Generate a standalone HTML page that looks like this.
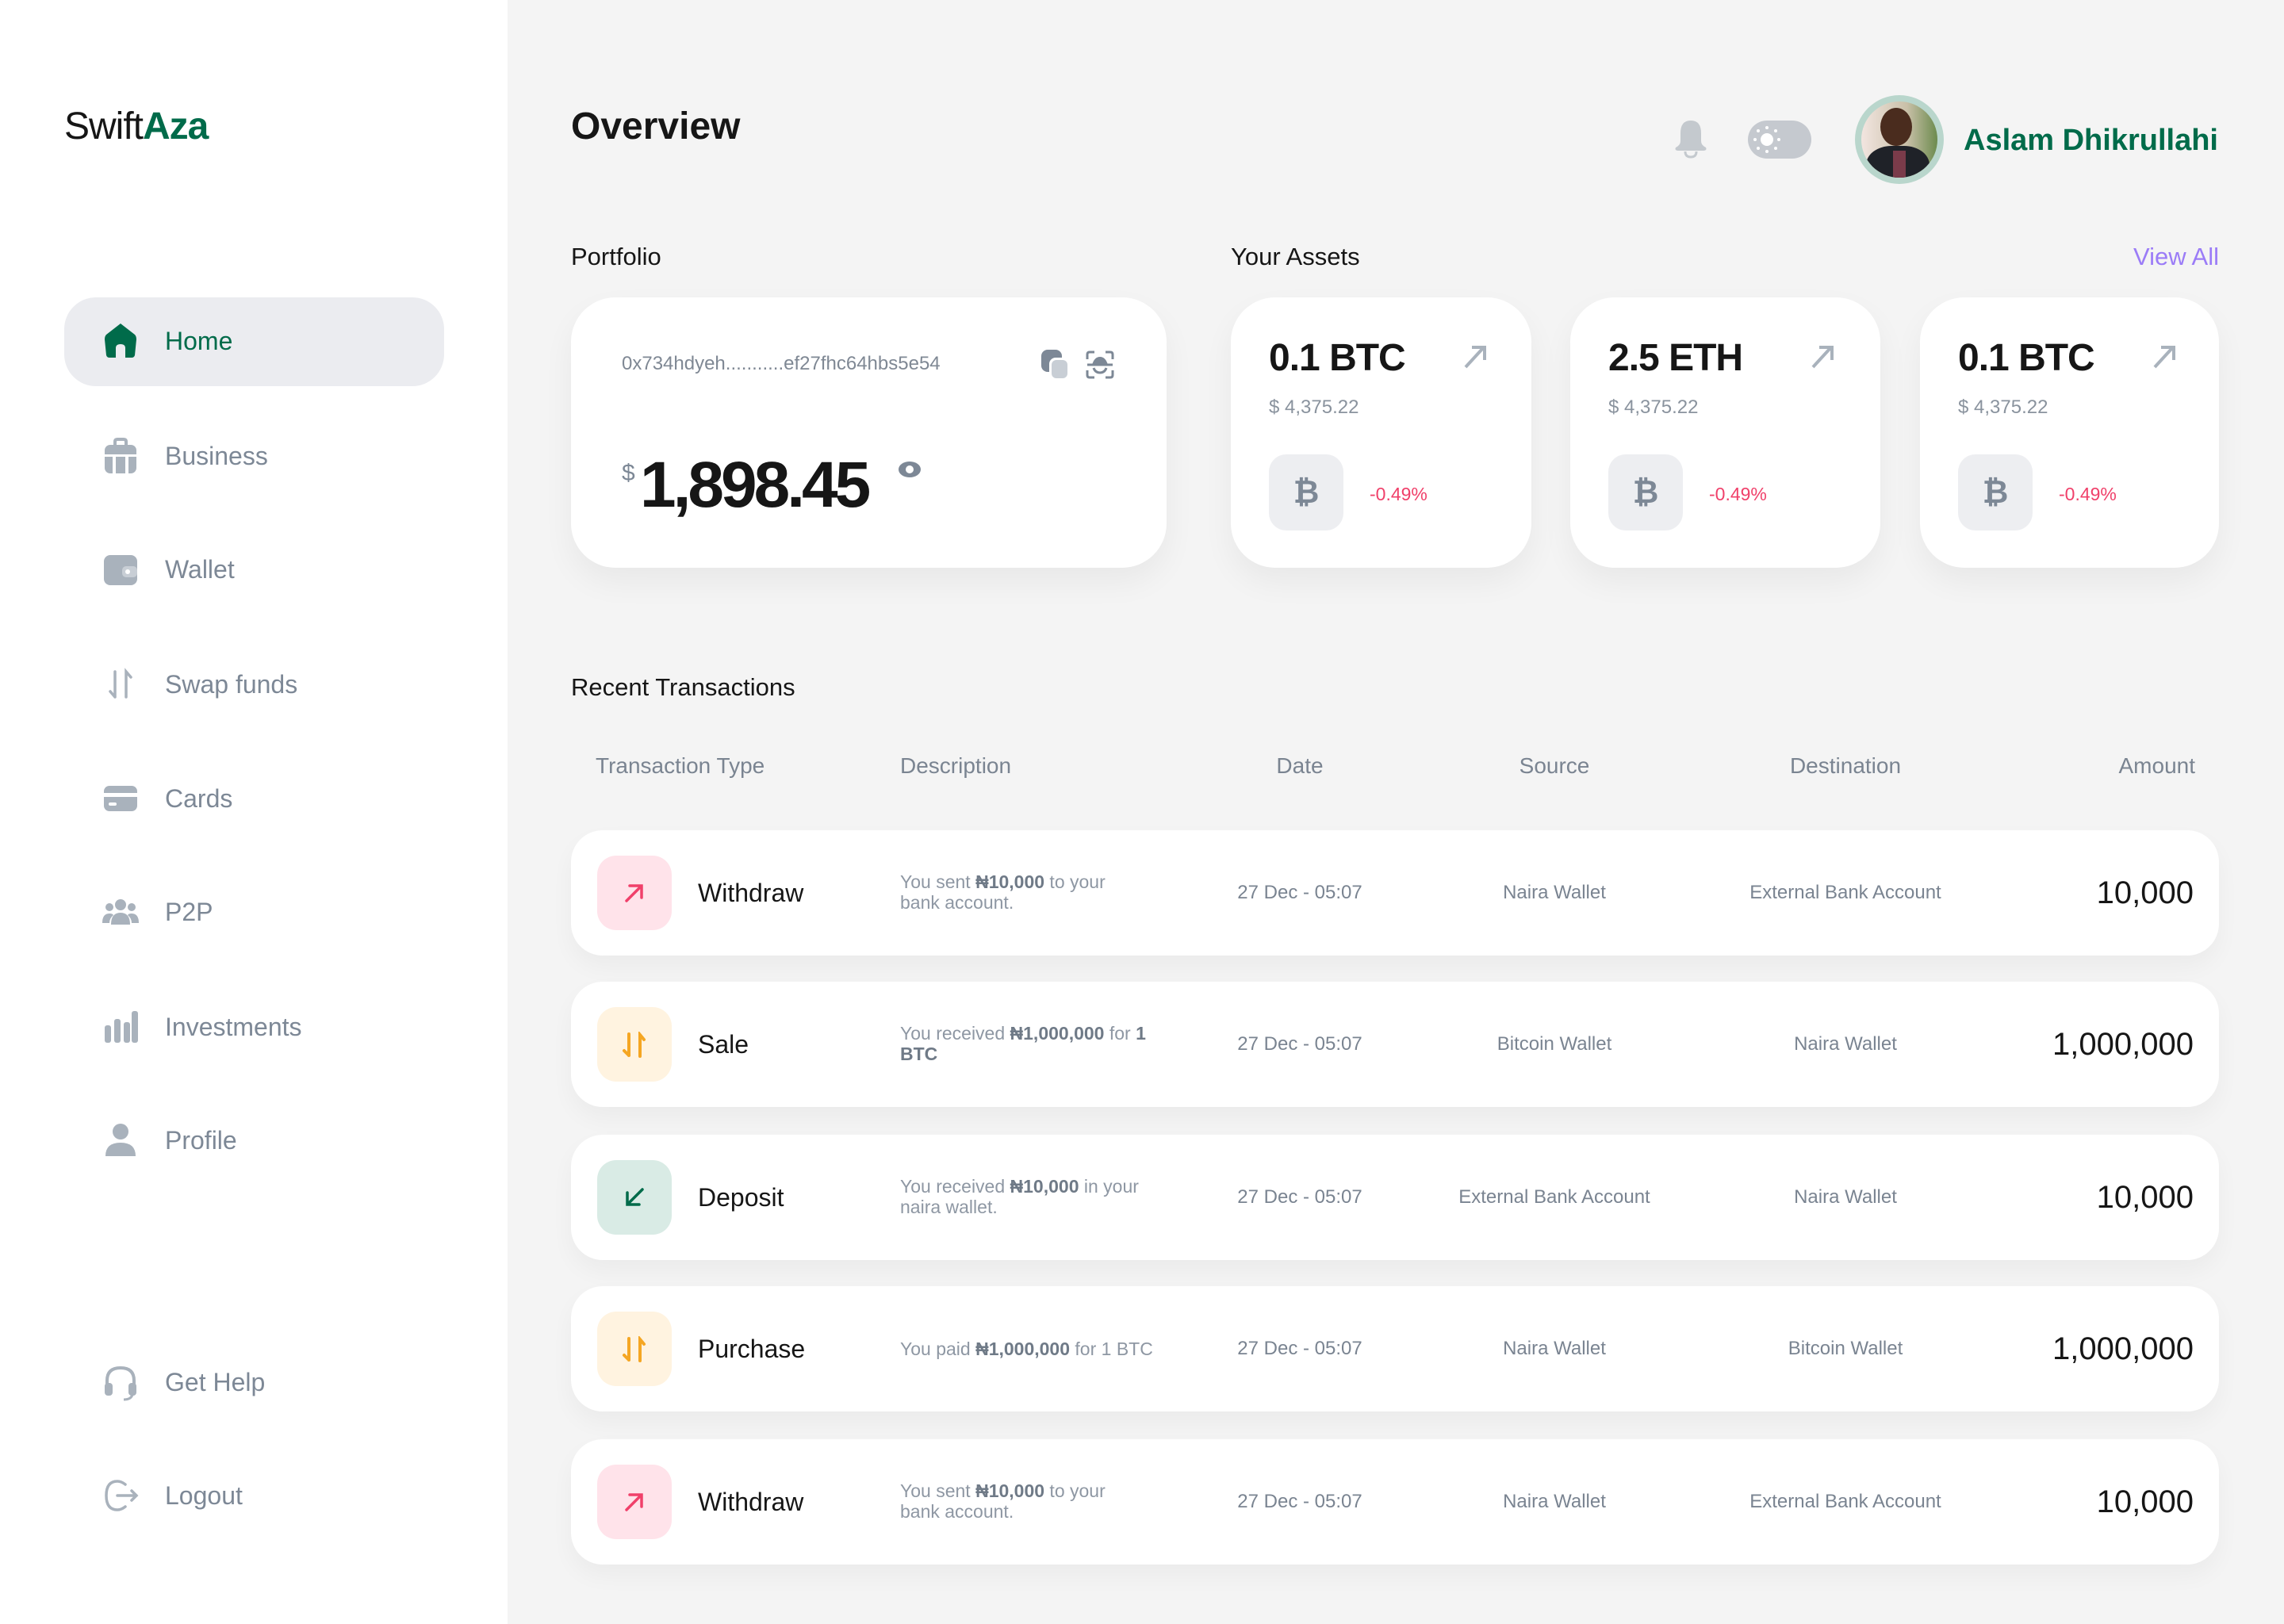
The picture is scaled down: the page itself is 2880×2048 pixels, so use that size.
<!DOCTYPE html>
<html><head><meta charset="utf-8"><style>
*{margin:0;padding:0;box-sizing:border-box}
body{width:2880px;height:2048px;position:relative;background:#f4f4f4;font-family:"Liberation Sans",sans-serif;overflow:hidden;color:#161616}
.a{position:absolute;white-space:nowrap}
#side{position:absolute;left:0;top:0;width:640px;height:2048px;background:#fff}
.nav{position:absolute;left:208px;font-size:32px;color:#7d8896;line-height:40px}
.ni{position:absolute;left:128px;width:48px;height:48px}
.card{position:absolute;background:#fff;border-radius:56px;box-shadow:0 18px 40px rgba(0,0,0,0.05)}
.row{position:absolute;left:720px;width:2078px;height:158px;background:#fff;border-radius:40px;box-shadow:0 14px 30px rgba(0,0,0,0.04)}
.ib{position:absolute;left:33px;top:32px;width:94px;height:94px;border-radius:24px}
.ty{position:absolute;left:160px;top:59px;font-size:32px;line-height:40px;font-weight:500}
.ds{position:absolute;left:415px;font-size:23px;line-height:26px;color:#8e97a3}
.ds b{color:#6f7a87;font-weight:700}
.c{position:absolute;font-size:24px;line-height:30px;color:#7a8491;text-align:center;width:400px;top:64px}
.am{position:absolute;right:32px;top:56px;font-size:40px;line-height:46px;text-align:right}
.hd{position:absolute;top:949px;font-size:28px;line-height:34px;color:#7a8491}
.coin{position:absolute;font-size:48px;font-weight:700;line-height:56px;left:48px;top:49px;letter-spacing:-1px}
.usd{position:absolute;left:48px;top:124px;font-size:24px;color:#8a939e;line-height:30px}
.bb{position:absolute;left:48px;top:198px;width:94px;height:96px;border-radius:22px;background:#edeef1;color:#7d8896;font-size:40px;font-weight:700;text-align:center;line-height:96px}
.pc{position:absolute;left:175px;top:233px;font-size:23px;color:#f0406a;line-height:30px}
.ar{position:absolute;top:56px;width:36px;height:36px}
</style></head><body>
<div id="side">
<div class="a" style="left:81px;top:132px;font-size:48px;line-height:56px;letter-spacing:-1px">Swift<b style="color:#006b4a;font-weight:900">Aza</b></div>
<div style="position:absolute;left:81px;top:375px;width:479px;height:112px;border-radius:40px;background:#ebecf0"></div>
<svg class="ni" style="top:406px" viewBox="0 0 48 48"><path d="M24 2 L42 16 Q44 18 44 22 L42 42 Q41 45 38 45 L30 45 L30 33 Q30 28 24 28 Q18 28 18 33 L18 45 L10 45 Q7 45 6 42 L4 22 Q4 18 6 16 Z" fill="#006b4a"/></svg>
<div class="nav" style="top:410px;color:#006b4a">Home</div>
<svg class="ni" style="top:551px" viewBox="0 0 48 48"><path d="M17 10 V6 Q17 3 20 3 H28 Q31 3 31 6 V10" stroke="#a9b2bc" stroke-width="4" fill="none"/><rect x="4" y="10" width="40" height="36" rx="7" fill="#a9b2bc"/><rect x="14" y="24" width="4" height="22" fill="#fff"/><rect x="30" y="24" width="4" height="22" fill="#fff"/><rect x="4" y="22" width="40" height="3" fill="#fff"/></svg>
<div class="nav" style="top:555px">Business</div>
<svg class="ni" style="top:694px" viewBox="0 0 48 48"><rect x="3" y="6" width="42" height="38" rx="8" fill="#a9b2bc"/><rect x="26" y="20" width="19" height="14" rx="5" fill="#c8ced5"/><circle cx="33" cy="27" r="3" fill="#fff"/></svg>
<div class="nav" style="top:698px">Wallet</div>
<svg class="ni" style="top:839px" viewBox="0 0 48 48"><path d="M17 8 V40 M17 40 L11 33 M31 40 V8 L37 15" stroke="#a9b2bc" stroke-width="3.5" fill="none" stroke-linecap="round"/></svg>
<div class="nav" style="top:843px">Swap funds</div>
<svg class="ni" style="top:983px" viewBox="0 0 48 48"><rect x="3" y="8" width="42" height="32" rx="7" fill="#a9b2bc"/><rect x="3" y="17" width="42" height="5" fill="#fff"/><rect x="9" y="29" width="10" height="4" rx="2" fill="#fff"/></svg>
<div class="nav" style="top:987px">Cards</div>
<svg class="ni" style="top:1126px" viewBox="0 0 48 48"><circle cx="24" cy="15" r="7" fill="#a9b2bc"/><circle cx="10" cy="18" r="5" fill="#a9b2bc"/><circle cx="38" cy="18" r="5" fill="#a9b2bc"/><path d="M12 40 Q12 25 24 25 Q36 25 36 40 Z M1 38 Q1 26 10 26 Q14 26 15 28 Q10 32 10 38 Z M47 38 Q47 26 38 26 Q34 26 33 28 Q38 32 38 38 Z" fill="#a9b2bc"/></svg>
<div class="nav" style="top:1130px">P2P</div>
<svg class="ni" style="top:1271px" viewBox="0 0 48 48"><rect x="4" y="22" width="8" height="22" rx="3" fill="#a9b2bc"/><rect x="16" y="14" width="8" height="30" rx="3" fill="#a9b2bc"/><rect x="28" y="18" width="8" height="26" rx="3" fill="#a9b2bc"/><rect x="38" y="4" width="8" height="40" rx="3" fill="#a9b2bc"/></svg>
<div class="nav" style="top:1275px">Investments</div>
<svg class="ni" style="top:1414px" viewBox="0 0 48 48"><circle cx="24" cy="13" r="10" fill="#a9b2bc"/><path d="M5 44 Q5 27 24 27 Q43 27 43 44 Z" fill="#a9b2bc"/></svg>
<div class="nav" style="top:1418px">Profile</div>
<svg class="ni" style="top:1719px" viewBox="0 0 48 48"><path d="M7 28 V22 Q7 6 24 6 Q41 6 41 22 V28" stroke="#a9b2bc" stroke-width="4" fill="none"/><rect x="4" y="25" width="10" height="16" rx="4" fill="#a9b2bc"/><rect x="34" y="25" width="10" height="16" rx="4" fill="#a9b2bc"/><path d="M39 40 Q37 46 28 46" stroke="#a9b2bc" stroke-width="3" fill="none"/></svg>
<div class="nav" style="top:1723px">Get Help</div>
<svg class="ni" style="top:1862px" viewBox="0 0 48 48"><path d="M30 10 Q25 6 20 6 Q6 6 6 24 Q6 42 20 42 Q25 42 30 38" stroke="#a9b2bc" stroke-width="3.5" fill="none" stroke-linecap="round"/><path d="M20 24 H44 M38 18 L44 24 L38 30" stroke="#a9b2bc" stroke-width="3.5" fill="none" stroke-linecap="round"/></svg>
<div class="nav" style="top:1866px">Logout</div>
</div>

<div class="a" style="left:720px;top:132px;font-size:48px;font-weight:700;line-height:56px">Overview</div>
<svg class="a" style="left:2111px;top:150px" width="42" height="50" viewBox="0 0 42 50"><path d="M21 2 Q34 2 34 18 V28 Q34 33 40 36 Q42 40 36 40 H6 Q0 40 2 36 Q8 33 8 28 V18 Q8 2 21 2Z" fill="#c4c9ce"/><path d="M14 41 Q14 48 21 48 Q28 48 28 41" stroke="#c4c9ce" stroke-width="3" fill="none"/></svg>
<div class="a" style="left:2204px;top:152px;width:80px;height:48px;border-radius:24px;background:#c5c9cf"></div>
<svg class="a" style="left:2210px;top:158px" width="36" height="36" viewBox="0 0 36 36"><circle cx="18" cy="18" r="8" fill="#fff"/><g fill="#fff"><circle cx="18" cy="3" r="2"/><circle cx="18" cy="33" r="2"/><circle cx="3" cy="18" r="2"/><circle cx="33" cy="18" r="2"/><circle cx="7" cy="7" r="2"/><circle cx="29" cy="29" r="2"/><circle cx="29" cy="7" r="2"/><circle cx="7" cy="29" r="2"/></g></svg>
<div class="a" style="left:2339px;top:120px;width:112px;height:112px;border-radius:50%;background:#b9d6cc"></div>
<div class="a" style="left:2347px;top:128px;width:96px;height:96px;border-radius:50%;overflow:hidden;background:linear-gradient(90deg,#f2e5e0,#c9c0a8 60%,#6c8b4e)">
<div style="position:absolute;left:24px;top:8px;width:40px;height:48px;border-radius:50%;background:#4a2c1e"></div>
<div style="position:absolute;left:6px;top:56px;width:80px;height:60px;border-radius:40% 40% 0 0;background:#1f2228"></div>
<div style="position:absolute;left:40px;top:62px;width:16px;height:40px;background:#7a3b4a"></div></div>
<div class="a" style="left:2476px;top:155px;font-size:38px;font-weight:700;color:#006b4a;line-height:44px">Aslam Dhikrullahi</div>

<div class="a" style="left:720px;top:306px;font-size:31px;font-weight:500;line-height:36px">Portfolio</div>
<div class="a" style="left:1552px;top:306px;font-size:31px;font-weight:500;line-height:36px">Your Assets</div>
<div class="a" style="right:82px;top:306px;font-size:31px;color:#9b7cf7;line-height:36px">View All</div>

<div class="card" style="left:720px;top:375px;width:751px;height:341px">
<div class="a" style="left:64px;top:69px;font-size:24px;color:#7f8894;line-height:30px">0x734hdyeh...........ef27fhc64hbs5e54</div>
<svg class="a" style="left:593px;top:66px" width="36" height="38" viewBox="0 0 36 38"><rect x="0" y="0" width="26" height="28" rx="8" fill="#7d8896"/><rect x="10" y="10" width="26" height="28" rx="8" fill="#fff"/><rect x="13" y="13" width="20" height="23" rx="6" fill="#c8ced5"/></svg>
<svg class="a" style="left:648px;top:66px" width="38" height="38" viewBox="0 0 38 38"><path d="M3 12 V6 Q3 3 6 3 H12 M26 3 H32 Q35 3 35 6 V12 M35 26 V32 Q35 35 32 35 H26 M12 35 H6 Q3 35 3 32 V26" stroke="#7d8896" stroke-width="3" fill="none"/><path d="M3 19 H35" stroke="#7d8896" stroke-width="3"/><path d="M9 19 Q12 9 19 9 Q26 9 29 19Z" fill="#7d8896"/><path d="M11 23 Q13 29 19 29 Q25 29 27 23" stroke="#7d8896" stroke-width="3" fill="none"/></svg>
<div class="a" style="left:64px;top:205px;font-size:30px;color:#7d8896;line-height:34px">$</div>
<div class="a" style="left:87px;top:192px;font-size:82px;font-weight:700;line-height:90px;letter-spacing:-4px">1,898.45</div>
<svg class="a" style="left:412px;top:205px" width="30" height="24" viewBox="0 0 30 24"><ellipse cx="15" cy="12" rx="14" ry="10" fill="#7d8896"/><circle cx="15" cy="12" r="5" fill="#fff"/></svg>
</div>

<div class="card" style="left:1552px;top:375px;width:379px;height:341px">
<div class="coin">0.1 BTC</div><div class="usd">$ 4,375.22</div>
<svg class="ar" style="left:290px" viewBox="0 0 36 36"><path d="M6 32 L28 8 M14 7 H30 V23" stroke="#a9b2bc" stroke-width="4" fill="none"/></svg>
<div class="bb">₿</div><div class="pc">-0.49%</div></div>
<div class="card" style="left:1980px;top:375px;width:391px;height:341px">
<div class="coin">2.5 ETH</div><div class="usd">$ 4,375.22</div>
<svg class="ar" style="left:300px" viewBox="0 0 36 36"><path d="M6 32 L28 8 M14 7 H30 V23" stroke="#a9b2bc" stroke-width="4" fill="none"/></svg>
<div class="bb">₿</div><div class="pc">-0.49%</div></div>
<div class="card" style="left:2421px;top:375px;width:377px;height:341px">
<div class="coin">0.1 BTC</div><div class="usd">$ 4,375.22</div>
<svg class="ar" style="left:290px" viewBox="0 0 36 36"><path d="M6 32 L28 8 M14 7 H30 V23" stroke="#a9b2bc" stroke-width="4" fill="none"/></svg>
<div class="bb">₿</div><div class="pc">-0.49%</div></div>

<div class="a" style="left:720px;top:849px;font-size:31px;font-weight:500;line-height:36px">Recent Transactions</div>
<div class="hd" style="left:751px">Transaction Type</div>
<div class="hd" style="left:1135px">Description</div>
<div class="hd" style="left:1439px;width:400px;text-align:center">Date</div>
<div class="hd" style="left:1760px;width:400px;text-align:center">Source</div>
<div class="hd" style="left:2127px;width:400px;text-align:center">Destination</div>
<div class="hd" style="right:112px">Amount</div>

<div class="row" style="top:1047px">
<div class="ib" style="background:#ffe3ea"></div>
<svg class="a" style="left:66px;top:65px" width="28" height="28" viewBox="0 0 28 28"><path d="M4 24 L22 6 M8 5 H23 V20" stroke="#f0406a" stroke-width="3.5" fill="none" stroke-linecap="round"/></svg>
<div class="ty">Withdraw</div>
<div class="ds" style="top:52px">You sent <b>₦10,000</b> to your<br>bank account.</div>
<div class="c" style="left:719px">27 Dec - 05:07</div>
<div class="c" style="left:1040px">Naira Wallet</div>
<div class="c" style="left:1407px">External Bank Account</div>
<div class="am">10,000</div></div>
<div class="row" style="top:1238px">
<div class="ib" style="background:#fff3e0"></div>
<svg class="a" style="left:62px;top:63px" width="36" height="34" viewBox="0 0 36 34"><path d="M11 3 V30 M11 30 L5 24 M25 31 V4 L30 10" stroke="#f5a623" stroke-width="4" fill="none" stroke-linecap="round"/></svg>
<div class="ty">Sale</div>
<div class="ds" style="top:52px">You received <b>₦1,000,000</b> for <b>1</b><br><b>BTC</b></div>
<div class="c" style="left:719px">27 Dec - 05:07</div>
<div class="c" style="left:1040px">Bitcoin Wallet</div>
<div class="c" style="left:1407px">Naira Wallet</div>
<div class="am">1,000,000</div></div>
<div class="row" style="top:1431px">
<div class="ib" style="background:#d9ebe5"></div>
<svg class="a" style="left:66px;top:65px" width="28" height="28" viewBox="0 0 28 28"><path d="M24 4 L6 22 M5 8 V23 H20" stroke="#006b4a" stroke-width="3.5" fill="none" stroke-linecap="round"/></svg>
<div class="ty">Deposit</div>
<div class="ds" style="top:52px">You received <b>₦10,000</b> in your<br>naira wallet.</div>
<div class="c" style="left:719px">27 Dec - 05:07</div>
<div class="c" style="left:1040px">External Bank Account</div>
<div class="c" style="left:1407px">Naira Wallet</div>
<div class="am">10,000</div></div>
<div class="row" style="top:1622px">
<div class="ib" style="background:#fff3e0"></div>
<svg class="a" style="left:62px;top:63px" width="36" height="34" viewBox="0 0 36 34"><path d="M11 3 V30 M11 30 L5 24 M25 31 V4 L30 10" stroke="#f5a623" stroke-width="4" fill="none" stroke-linecap="round"/></svg>
<div class="ty">Purchase</div>
<div class="ds" style="top:66px">You paid <b>₦1,000,000</b> for 1 BTC</div>
<div class="c" style="left:719px">27 Dec - 05:07</div>
<div class="c" style="left:1040px">Naira Wallet</div>
<div class="c" style="left:1407px">Bitcoin Wallet</div>
<div class="am">1,000,000</div></div>
<div class="row" style="top:1815px">
<div class="ib" style="background:#ffe3ea"></div>
<svg class="a" style="left:66px;top:65px" width="28" height="28" viewBox="0 0 28 28"><path d="M4 24 L22 6 M8 5 H23 V20" stroke="#f0406a" stroke-width="3.5" fill="none" stroke-linecap="round"/></svg>
<div class="ty">Withdraw</div>
<div class="ds" style="top:52px">You sent <b>₦10,000</b> to your<br>bank account.</div>
<div class="c" style="left:719px">27 Dec - 05:07</div>
<div class="c" style="left:1040px">Naira Wallet</div>
<div class="c" style="left:1407px">External Bank Account</div>
<div class="am">10,000</div></div>
</body></html>
